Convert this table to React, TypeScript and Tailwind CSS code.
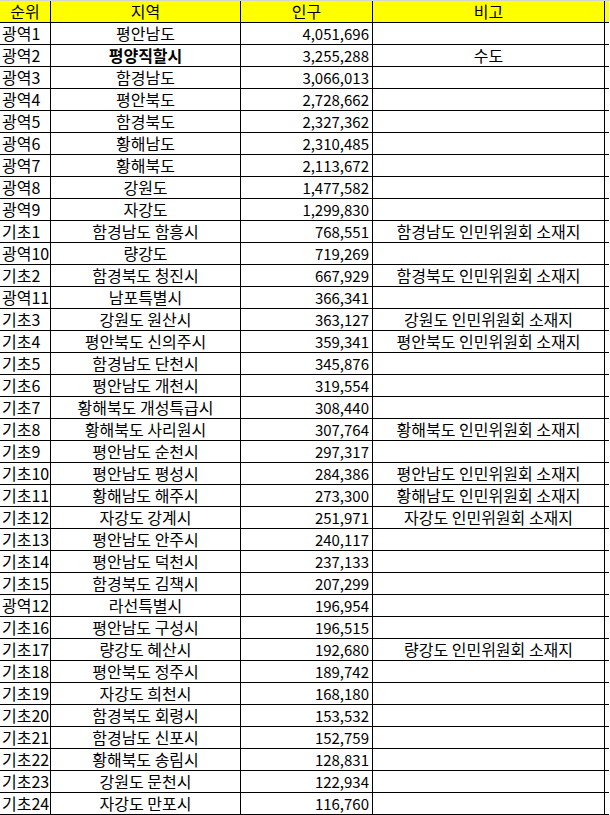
const rows: [string, string, string, string][] = [
  ["광역1", "평안남도", "4,051,696", ""],
  ["광역2", "평양직할시", "3,255,288", "수도"],
  ["광역3", "함경남도", "3,066,013", ""],
  ["광역4", "평안북도", "2,728,662", ""],
  ["광역5", "함경북도", "2,327,362", ""],
  ["광역6", "황해남도", "2,310,485", ""],
  ["광역7", "황해북도", "2,113,672", ""],
  ["광역8", "강원도", "1,477,582", ""],
  ["광역9", "자강도", "1,299,830", ""],
  ["기초1", "함경남도 함흥시", "768,551", "함경남도 인민위원회 소재지"],
  ["광역10", "량강도", "719,269", ""],
  ["기초2", "함경북도 청진시", "667,929", "함경북도 인민위원회 소재지"],
  ["광역11", "남포특별시", "366,341", ""],
  ["기초3", "강원도 원산시", "363,127", "강원도 인민위원회 소재지"],
  ["기초4", "평안북도 신의주시", "359,341", "평안북도 인민위원회 소재지"],
  ["기초5", "함경남도 단천시", "345,876", ""],
  ["기초6", "평안남도 개천시", "319,554", ""],
  ["기초7", "황해북도 개성특급시", "308,440", ""],
  ["기초8", "황해북도 사리원시", "307,764", "황해북도 인민위원회 소재지"],
  ["기초9", "평안남도 순천시", "297,317", ""],
  ["기초10", "평안남도 평성시", "284,386", "평안남도 인민위원회 소재지"],
  ["기초11", "황해남도 해주시", "273,300", "황해남도 인민위원회 소재지"],
  ["기초12", "자강도 강계시", "251,971", "자강도 인민위원회 소재지"],
  ["기초13", "평안남도 안주시", "240,117", ""],
  ["기초14", "평안남도 덕천시", "237,133", ""],
  ["기초15", "함경북도 김책시", "207,299", ""],
  ["광역12", "라선특별시", "196,954", ""],
  ["기초16", "평안남도 구성시", "196,515", ""],
  ["기초17", "량강도 혜산시", "192,680", "량강도 인민위원회 소재지"],
  ["기초18", "평안북도 정주시", "189,742", ""],
  ["기초19", "자강도 희천시", "168,180", ""],
  ["기초20", "함경북도 회령시", "153,532", ""],
  ["기초21", "함경남도 신포시", "152,759", ""],
  ["기초22", "황해북도 송림시", "128,831", ""],
  ["기초23", "강원도 문천시", "122,934", ""],
  ["기초24", "자강도 만포시", "116,760", ""],
];

const grid = "grid grid-cols-[51px_190px_132px_232px] w-[609px] border-b border-black";
const cell = "h-[21px] leading-[21px] border-r border-black whitespace-nowrap";

export default function App() {
  return (
    <div
      className="bg-white text-black text-[16px]"
      style={{ fontFamily: '"Noto Sans CJK KR", "Noto Sans", sans-serif' }}
    >
      <div className="border-t border-[#d4d4d4]">
        <div className={`${grid} bg-[#ffff00]`}>
          <div className={`${cell} text-center`}>순위</div>
          <div className={`${cell} text-center`}>지역</div>
          <div className={`${cell} text-center`}>인구</div>
          <div className={`${cell} text-center`}>비고</div>
        </div>
        {rows.map(([rank, region, pop, note]) => (
          <div key={rank} className={grid}>
            <div className={`${cell} pl-[2px]`}>{rank}</div>
            <div className={`${cell} text-center ${region === "평양직할시" ? "font-bold" : ""}`}>
              {region}
            </div>
            <div className={`${cell} text-right pr-[3px] text-[15px]`}>{pop}</div>
            <div className={`${cell} text-center`}>{note}</div>
          </div>
        ))}
      </div>
    </div>
  );
}
